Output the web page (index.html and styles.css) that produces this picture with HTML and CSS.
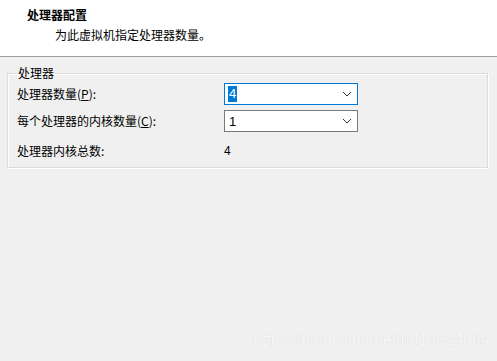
FILE: index.html
```html
<!DOCTYPE html>
<html lang="zh-CN">
<head>
    <meta charset="UTF-8">
    <title>处理器配置</title>
    <link rel="stylesheet" href="styles.css">
</head>
<body>
    <div class="header">
        <div class="title">处理器配置</div>
        <div class="subtitle">为此虚拟机指定处理器数量。</div>
    </div>
    <fieldset class="group">
        <legend>处理器</legend>
        <div class="row">
            <label>处理器数量(<u>P</u>):</label>
            <div class="combo active">
                <span class="sel">4</span>
                <svg class="arrow" width="10" height="6" viewBox="0 0 10 6"><path d="M1 1 L5 5 L9 1" fill="none" stroke="#333" stroke-width="1"/></svg>
            </div>
        </div>
        <div class="row">
            <label>每个处理器的内核数量(<u>C</u>):</label>
            <div class="combo">
                <span>1</span>
                <svg class="arrow" width="10" height="6" viewBox="0 0 10 6"><path d="M1 1 L5 5 L9 1" fill="none" stroke="#333" stroke-width="1"/></svg>
            </div>
        </div>
        <div class="row total">
            <label>处理器内核总数:</label>
            <span class="value">4</span>
        </div>
    </fieldset>
    <div class="watermark">https://blog.csdn.net/u013824564</div>
</body>
</html>
```
FILE: styles.css
```css
body{
    margin: 0;
    background: #f0f0f0;
    font-family: "Noto Sans CJK SC", "Liberation Sans", sans-serif;
    font-size: 12px;
    color: #000;
    width: 497px;
    height: 361px;
    overflow: hidden;
}
.header{
    height: 57px;
    background: #fff;
    border-bottom: 1px solid #a0a0a0;
    box-sizing: border-box;
    padding: 6px 0 0 27px;
}
.title{
    font-weight: bold;
    line-height: 18px;
}
.subtitle{
    padding-left: 28px;
    line-height: 18px;
    margin-top: 2px;
}
.group{
    margin: 9px 9px 0 7px;
    height: 102px;
    box-sizing: border-box;
    border: 1px solid #dcdcdc;
    box-shadow: inset 1px 1px 0 #fff, 1px 1px 0 #fff;
    padding: 0 0 0 9px;
}
.group legend{
    padding: 0 1px;
    margin-left: 0;
    line-height: 14px;
}
.row{
    display: grid;
    grid-template-columns: 207px 134px;
    align-items: center;
    height: 22px;
    margin-top: 5px;
}
.row:first-of-type{
    margin-top: 3px;
}
.row label{
    line-height: 14px;
}
.combo{
    height: 22px;
    box-sizing: border-box;
    border: 1px solid #7a7a7a;
    background: #fff;
    display: flex;
    align-items: center;
    justify-content: space-between;
    padding: 0 5px 0 4px;
    font-family: "Liberation Sans", sans-serif;
    font-size: 13px;
}
.combo.active{
    border-color: #0078d7;
    padding-left: 3px;
}
.sel{
    background: #0078d7;
    color: #fff;
    padding: 0 1px;
    line-height: 16px;
}
.total{
    margin-top: 8px;
}
.value{
    font-family: "Liberation Sans", sans-serif;
    font-size: 12px;
}
.watermark{
    position: absolute;
    left: 253px;
    top: 331px;
    font-family: "Liberation Sans", sans-serif;
    font-size: 16px;
    color: #f8f8f8;
    text-shadow: 0 0 1px #d0d0d0;
}
```
